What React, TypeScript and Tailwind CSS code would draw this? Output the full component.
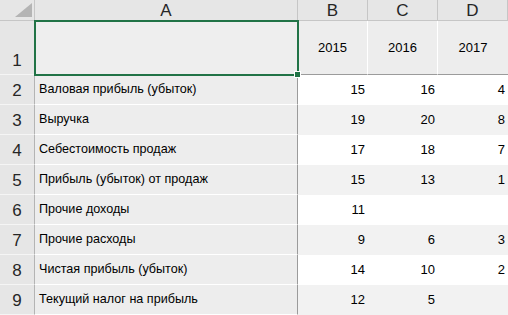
import React from 'react';

const rows: { label: string; b?: number; c?: number; d?: number }[] = [
  { label: 'Валовая прибыль (убыток)', b: 15, c: 16, d: 4 },
  { label: 'Выручка', b: 19, c: 20, d: 8 },
  { label: 'Себестоимость продаж', b: 17, c: 18, d: 7 },
  { label: 'Прибыль (убыток) от продаж', b: 15, c: 13, d: 1 },
  { label: 'Прочие доходы', b: 11 },
  { label: 'Прочие расходы', b: 9, c: 6, d: 3 },
  { label: 'Чистая прибыль (убыток)', b: 14, c: 10, d: 2 },
  { label: 'Текущий налог на прибыль', b: 12, c: 5 },
];

const font = { fontFamily: '"Liberation Sans", Arial, sans-serif' };

export default function App() {
  return (
    <div
      className="relative w-[508px] h-[315px] overflow-hidden bg-white text-black"
      style={font}
    >
      <div className="grid grid-cols-[35px_263px_70px_70px_70px] grid-rows-[21px_54px_repeat(8,30px)]">
        {/* column headers */}
        <div className="relative bg-[#e6e6e6] border-r border-b border-[#c6c6c6]">
          <svg width="35" height="21" className="absolute inset-0">
            <polygon points="32,3 32,17 15,17" fill="#b4b4b4" />
          </svg>
        </div>
        {['A', 'B', 'C', 'D'].map((l) => (
          <div
            key={l}
            className="flex items-center justify-center bg-[#e6e6e6] border-r border-b border-[#c6c6c6] text-[17px] text-[#262626] leading-none"
          >
            {l}
          </div>
        ))}

        {/* row 1 */}
        <div className="flex items-end justify-center pb-[5px] bg-[#e6e6e6] border-r border-b border-r-[#b4b4b4] border-b-[#f5f5f5] text-[17px] text-[#262626] leading-none">
          1
        </div>
        <div className="bg-[#eeeeee] border-r border-b border-[#9b9b9b]" />
        {[2015, 2016, 2017].map((y, i) => (
          <div
            key={y}
            className={`flex items-center justify-center bg-[#ededed] border-b border-[#9b9b9b] text-[13px] ${
              i < 2 ? 'border-r border-r-white' : ''
            }`}
          >
            {y}
          </div>
        ))}

        {/* data rows */}
        {rows.map((r, i) => {
          const band = i % 2 === 1 ? 'bg-[#f2f2f2]' : 'bg-white';
          return (
            <React.Fragment key={r.label}>
              <div className="flex items-end justify-center pb-[5px] bg-[#e6e6e6] border-r border-b border-r-[#b4b4b4] border-b-[#f5f5f5] text-[17px] text-[#262626] leading-none">
                {i + 2}
              </div>
              <div className="flex items-center pl-[4px] bg-[#ededed] border-r border-b border-r-[#9b9b9b] border-b-white text-[12.6px] whitespace-nowrap">
                {r.label}
              </div>
              {[r.b, r.c, r.d].map((v, j) => (
                <div key={j} className={`flex items-center justify-end pr-[3px] text-[13px] ${band}`}>
                  {v}
                </div>
              ))}
            </React.Fragment>
          );
        })}
      </div>

      {/* selection on A1 */}
      <div className="absolute left-[34px] top-[20px] w-[265px] h-[56px] border-2 border-[#217346]" />
      <div className="absolute left-[294px] top-[71px] w-[7px] h-[7px] bg-[#217346] border border-white" />
    </div>
  );
}
